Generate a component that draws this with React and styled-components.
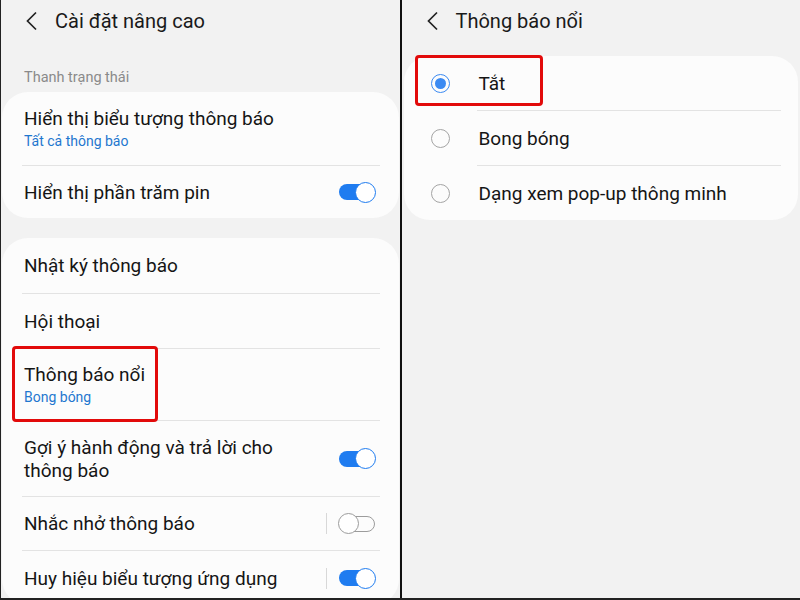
import styled, { createGlobalStyle } from 'styled-components'

const GlobalStyle = createGlobalStyle`
  html, body {
    margin: 0;
    padding: 0;
    background: #f2f2f2;
    font-family: Roboto, "Noto Sans", "Liberation Sans", sans-serif;
    color: #151515;
  }
`

const Screen = styled.div`
  display: flex;
  width: 800px;
  height: 600px;
  overflow: hidden;
  box-sizing: border-box;
  border-left: 1px solid #222;
  border-bottom: 2px solid #222;
`

const Panel = styled.div`
  flex: 1;
  display: flex;
  flex-direction: column;
  background: #f2f2f2;
  border-right: ${p => (p.$divider ? '2px solid #111' : 'none')};
  overflow: hidden;
`

const Header = styled.div`
  height: 42px;
  display: flex;
  align-items: center;
  padding-left: 24px;
  gap: 16px;
  flex-shrink: 0;
`

const Title = styled.div`
  font-size: 20px;
  color: #1a1a1a;
`

const SectionLabel = styled.div`
  margin: 26px 0 4px 23px;
  font-size: 14.5px;
  line-height: 20px;
  color: #8a8a8a;
`

const Card = styled.div`
  background: #fcfcfc;
  border-radius: 26px;
  margin: ${p => p.$margin || '0 1px'};
  flex-shrink: 0;
`

const Row = styled.div`
  position: relative;
  display: flex;
  align-items: center;
  min-height: ${p => p.$h || 54}px;
  padding: 0 24px 0 ${p => p.$pl || 22}px;
  box-sizing: border-box;
  gap: 12px;
`

const Divider = styled.div`
  height: 1px;
  background: #e3e3e3;
  margin: 0 ${p => p.$right || 19}px 0 ${p => p.$left || 20}px;
`

const Texts = styled.div`
  flex: 1;
  display: flex;
  flex-direction: column;
`

const Label = styled.div`
  font-size: 19px;
  line-height: 23px;
`

const Sub = styled.div`
  font-size: 14px;
  line-height: 18px;
  margin-top: 2px;
  color: #1f77cf;
`

const Separator = styled.div`
  width: 1px;
  height: 21px;
  background: #d8d8d8;
`

const Track = styled.div`
  position: relative;
  width: 36px;
  height: 16px;
  border-radius: 8px;
  box-sizing: border-box;
  background: ${p => (p.$on ? '#1f7cf0' : '#fcfcfc')};
  border: ${p => (p.$on ? 'none' : '1.5px solid #9c9c9c')};
  flex-shrink: 0;
`

const Thumb = styled.div`
  position: absolute;
  top: 50%;
  ${p => (p.$on ? 'right: -1px;' : 'left: -2px;')}
  width: 21px;
  height: 21px;
  margin-top: -10.5px;
  border-radius: 50%;
  box-sizing: border-box;
  background: #fff;
  border: 1.5px solid ${p => (p.$on ? '#1f7cf0' : '#9c9c9c')};
`

const Highlight = styled.div`
  position: absolute;
  left: ${p => p.$l}px;
  top: ${p => p.$t}px;
  width: ${p => p.$w}px;
  height: ${p => p.$hh}px;
  border: 3px solid #e20a0a;
  border-radius: 4px;
  box-sizing: border-box;
  pointer-events: none;
`

const Radio = styled.div`
  width: 19px;
  height: 19px;
  border-radius: 50%;
  box-sizing: border-box;
  border: 1.5px solid ${p => (p.$on ? '#3b8af2' : '#a4a4a4')};
  display: flex;
  align-items: center;
  justify-content: center;
  flex-shrink: 0;
  margin-right: 17px;
  &::after {
    content: '';
    display: ${p => (p.$on ? 'block' : 'none')};
    width: 11px;
    height: 11px;
    border-radius: 50%;
    background: #3b8af2;
  }
`

const Back = () => (
  <svg width="14" height="20" viewBox="0 0 14 20">
    <polyline points="11,1.5 2.5,10 11,18.5" fill="none" stroke="#222" strokeWidth="1.7" />
  </svg>
)

const Toggle = ({ on, sep }) => (
  <>
    {sep && <Separator />}
    <Track $on={on}>
      <Thumb $on={on} />
    </Track>
  </>
)

const SettingRow = ({ label, sub, toggle, sep, h, children }) => (
  <Row $h={h}>
    <Texts>
      <Label>{label}</Label>
      {sub && <Sub>{sub}</Sub>}
    </Texts>
    {toggle !== undefined && <Toggle on={toggle} sep={sep} />}
    {children}
  </Row>
)

const options = ['Tắt', 'Bong bóng', 'Dạng xem pop-up thông minh']

export default function App() {
  return (
    <>
      <GlobalStyle />
      <Screen>
        <Panel $divider>
          <Header>
            <Back />
            <Title>Cài đặt nâng cao</Title>
          </Header>
          <SectionLabel>Thanh trạng thái</SectionLabel>
          <Card>
            <SettingRow h={73} label="Hiển thị biểu tượng thông báo" sub="Tất cả thông báo" />
            <Divider />
            <SettingRow h={52} label="Hiển thị phần trăm pin" toggle={true} />
          </Card>
          <Card $margin="20px 1px 0">
            <SettingRow h={55} label="Nhật ký thông báo" />
            <Divider />
            <SettingRow h={54} label="Hội thoại" />
            <Divider />
            <SettingRow h={71} label="Thông báo nổi" sub="Bong bóng">
              <Highlight $l={10} $t={-3} $w={146} $hh={76} />
            </SettingRow>
            <Divider />
            <Row $h={75}>
              <Texts>
                <Label>Gợi ý hành động và trả lời cho<br />thông báo</Label>
              </Texts>
              <Toggle on={true} />
            </Row>
            <Divider />
            <SettingRow h={53} label="Nhắc nhở thông báo" toggle={false} sep />
            <Divider />
            <SettingRow h={54} label="Huy hiệu biểu tượng ứng dụng" toggle={true} sep />
          </Card>
        </Panel>
        <Panel>
          <Header>
            <Back />
            <Title>Thông báo nổi</Title>
          </Header>
          <Card $margin="14px 2px 0 2px">
            {options.map((o, i) => (
              <div key={o}>
                {i > 0 && <Divider $left={73} $right={17} />}
                <Row $h={54} $pl={27}>
                  <Radio $on={i === 0} />
                  <Label>{o}</Label>
                  {i === 0 && <Highlight $l={11} $t={-1} $w={128} $hh={51} />}
                </Row>
              </div>
            ))}
          </Card>
        </Panel>
      </Screen>
    </>
  )
}
